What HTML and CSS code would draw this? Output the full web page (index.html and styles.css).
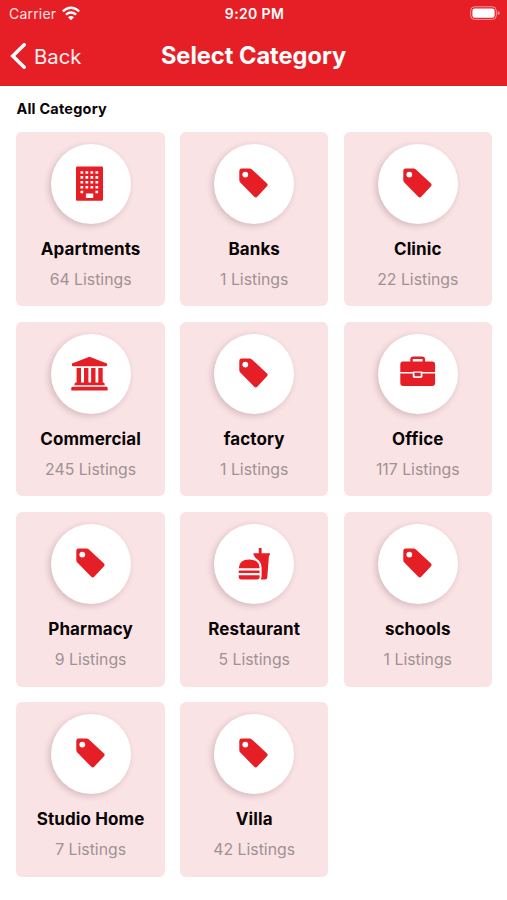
FILE: index.html
```html
<!DOCTYPE html>
<html lang="en">
<head>
    <meta charset="UTF-8">
    <meta name="viewport" content="width=device-width, initial-scale=1.0">
    <title>Select Category</title>
    <link rel="stylesheet" href="styles.css">
</head>
<body>

<!-- Category icons -->
<svg class="icons" width="0" height="0">
    <symbol id="tag" viewBox="0 0 40 40">
        <path fill-rule="evenodd" d="M7.6 4.6H15.4Q17 4.6 18.2 5.7L33 19.4Q34.4 20.8 33 22.3L23.2 32.8Q21.8 34.2 20.3 32.8L6.3 18.6Q5.3 17.5 5.3 16V6.9Q5.3 4.6 7.6 4.6ZM11.3 7.7A2.9 2.9 0 1 0 11.3 13.5A2.9 2.9 0 1 0 11.3 7.7Z"/>
    </symbol>
    <symbol id="building" viewBox="0 0 40 40">
        <rect x="5" y="2.5" width="27" height="34.2" rx="1"/>
        <path class="windows" d="M9.5 8.5H28M9.5 13.4H28M9.5 18.3H28M9.5 23.2H28"/>
        <path class="windows" d="M9.5 28H12.2M24.4 28H28"/>
        <rect class="cut" x="14.9" y="29.4" width="7.4" height="4.7" rx=".5"/>
    </symbol>
    <symbol id="bank" viewBox="0 0 40 40">
        <path d="M18.5 2.7L36 9.5V11.4Q36 12.2 35 12.2H2Q1 12.2 1 11.4V9.5Z"/>
        <path d="M5.6 14H10V29H5.6ZM13 14H17.4V29H13ZM20.1 14H24.5V29H20.1ZM27.3 14H31.7V29H27.3Z"/>
        <path d="M4.5 28.5H32.7Q33.8 28.5 33.8 31.3H3.4Q3.4 28.5 4.5 28.5ZM1.5 32.7H35.5Q36.6 32.7 36.6 34V36.6H.3V34Q.3 32.7 1.5 32.7Z"/>
    </symbol>
    <symbol id="briefcase" viewBox="0 0 40 40">
        <path class="line" d="M13.5 9V5.2Q13.5 3.8 15 3.8H24.3Q25.8 3.8 25.8 5.2V9"/>
        <path d="M5 7.6H34.2Q37.1 7.6 37.1 10.5V17.9H24.4V17.4H14.9V17.9H2.3V10.5Q2.3 7.6 5 7.6Z"/>
        <path d="M2.3 19.4H37.1V29Q37.1 32 34.2 32H5.2Q2.3 32 2.3 29Z"/>
        <rect class="cut" x="14.8" y="18" width="9.6" height="6" rx="1.4"/>
        <rect x="16.5" y="18.7" width="6.2" height="3.5" rx=".6"/>
    </symbol>
    <symbol id="food" viewBox="0 0 40 40">
        <path d="M24.8 3.9H27.6V9.2H35.9V11.3H35L33.3 33.2Q33.1 35.4 31 35.4H26.7Q27.6 34 27.6 32V24Q27.6 18 22.5 14.7Q20.6 13.4 20 11.3H19.5V9.2H24.8Z"/>
        <path d="M4.7 24.2Q5 15.4 15.3 15.4Q25.4 15.4 25.6 24.2Z"/>
        <rect x="4.7" y="26.4" width="20.9" height="2.6" rx=".6"/>
        <path d="M4.7 31.2H25.6V33Q25.6 35.4 23 35.4H7.3Q4.7 35.4 4.7 33Z"/>
    </symbol>
</svg>

<header>
    <div class="status">
        <div class="carrier">
            <span>Carrier</span>
            <svg width="20" height="15" viewBox="0 0 20 15">
                <path class="wave" d="M1.8 5.3Q10 -1.7 18.2 5.3M4.9 8.6Q10 4.5 15.1 8.6"/>
                <path d="M10 14.2L7 11.2Q10 8.9 13 11.2Z"/>
            </svg>
        </div>
        <span class="time">9:20 PM</span>
        <svg class="battery" width="30" height="15" viewBox="0 0 30 15">
            <rect class="shell" x=".7" y=".8" width="25.6" height="12.6" rx="3.8"/>
            <rect x="2.4" y="2.5" width="22.2" height="9.2" rx="2.2"/>
            <path class="tip" d="M27.7 5Q29.8 5.7 29.8 7.1Q29.8 8.5 27.7 9.2Z"/>
        </svg>
    </div>
    <div class="navbar">
        <a class="back">
            <svg width="16" height="26" viewBox="0 0 16 26">
                <path d="M14.2 1.8L2.8 13L14.2 24.2"/>
            </svg>
            <span>Back</span>
        </a>
        <h1>Select Category</h1>
    </div>
</header>

<main>
    <h2>All Category</h2>
    <div class="grid">
        <div class="card">
            <div class="circle"><svg><use href="#building"/></svg></div>
            <h3>Apartments</h3>
            <p>64 Listings</p>
        </div>
        <div class="card">
            <div class="circle"><svg><use href="#tag"/></svg></div>
            <h3>Banks</h3>
            <p>1 Listings</p>
        </div>
        <div class="card">
            <div class="circle"><svg><use href="#tag"/></svg></div>
            <h3>Clinic</h3>
            <p>22 Listings</p>
        </div>
        <div class="card">
            <div class="circle"><svg><use href="#bank"/></svg></div>
            <h3>Commercial</h3>
            <p>245 Listings</p>
        </div>
        <div class="card">
            <div class="circle"><svg><use href="#tag"/></svg></div>
            <h3>factory</h3>
            <p>1 Listings</p>
        </div>
        <div class="card">
            <div class="circle"><svg><use href="#briefcase"/></svg></div>
            <h3>Office</h3>
            <p>117 Listings</p>
        </div>
        <div class="card">
            <div class="circle"><svg><use href="#tag"/></svg></div>
            <h3>Pharmacy</h3>
            <p>9 Listings</p>
        </div>
        <div class="card">
            <div class="circle"><svg><use href="#food"/></svg></div>
            <h3>Restaurant</h3>
            <p>5 Listings</p>
        </div>
        <div class="card">
            <div class="circle"><svg><use href="#tag"/></svg></div>
            <h3>schools</h3>
            <p>1 Listings</p>
        </div>
        <div class="card">
            <div class="circle"><svg><use href="#tag"/></svg></div>
            <h3>Studio Home</h3>
            <p>7 Listings</p>
        </div>
        <div class="card">
            <div class="circle"><svg><use href="#tag"/></svg></div>
            <h3>Villa</h3>
            <p>42 Listings</p>
        </div>
    </div>
</main>

</body>
</html>
```
FILE: styles.css
```css
* {
    box-sizing: border-box;
}
body {
    font-family: Inter, "Liberation Sans", sans-serif;
    margin: 0;
    background-color: #fff;
    color: #0a0506;
}
h1, h2, h3, p {
    margin: 0;
}
.icons {
    display: block;
}
header {
    height: 86px;
    background: #e61f26;
    color: white;
}
.status {
    display: grid;
    grid-template-columns: 1fr auto 1fr;
    align-items: center;
    height: 27px;
    padding: 0 7px 0 9px;
    font-size: 14px;
}
.carrier {
    display: flex;
    align-items: center;
    gap: 5px;
    letter-spacing: 0.2px;
    color: #fde4e5;
}
.carrier svg {
    fill: white;
}
.wave {
    fill: none;
    stroke: white;
    stroke-width: 2.3;
}
.time {
    font-weight: 600;
    letter-spacing: 0.35px;
}
.battery {
    justify-self: end;
    fill: white;
}
.shell {
    fill: none;
    stroke: #f29a9d;
}
.tip {
    fill: #f29a9d;
}
.navbar {
    display: grid;
    grid-template-columns: 1fr auto 1fr;
    align-items: center;
    height: 58px;
    padding: 0 10px;
}
.back {
    display: flex;
    align-items: center;
    gap: 8px;
    font-size: 20.3px;
    color: #fff0f0;
}
.back svg {
    fill: none;
    stroke: white;
    stroke-width: 3.6;
    stroke-linecap: round;
}
h1 {
    font-size: 23.6px;
    line-height: 30px;
    font-weight: 700;
}
main {
    padding: 14px 15px 0 16.4px;
}
h2 {
    font-size: 14.5px;
    line-height: 18px;
    font-weight: 700;
    letter-spacing: 0.22px;
}
.grid {
    display: grid;
    grid-template-columns: repeat(3, 1fr);
    grid-auto-rows: 174.4px;
    gap: 15.7px 15.2px;
    margin-top: 14px;
}
.card {
    display: flex;
    flex-direction: column;
    align-items: center;
    padding-top: 12px;
    border-radius: 6px;
    background: #fae3e5;
}
.circle {
    display: flex;
    align-items: center;
    justify-content: center;
    width: 80px;
    height: 80px;
    border-radius: 50%;
    background: white;
    box-shadow: -2px 2px 6px rgba(60, 25, 30, 0.2);
}
.circle svg {
    width: 40px;
    height: 40px;
    fill: #e61f26;
}
.windows {
    fill: none;
    stroke: white;
    stroke-width: 2.6;
    stroke-dasharray: 2.7 2.3;
}
.cut {
    fill: white;
}
.line {
    fill: none;
    stroke: #e61f26;
    stroke-width: 2.4;
}
.card h3 {
    margin-top: 14px;
    font-size: 17px;
    line-height: 22px;
    font-weight: 700;
    letter-spacing: 0.1px;
}
.card p {
    margin-top: 10px;
    font-size: 15.8px;
    line-height: 20px;
    color: #a09193;
}
```
